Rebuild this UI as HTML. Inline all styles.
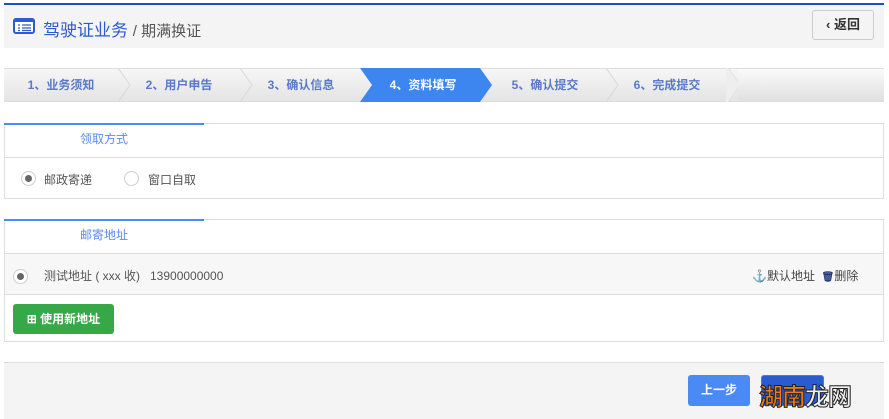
<!DOCTYPE html>
<html><head><meta charset="utf-8"><style>
*{margin:0;padding:0;box-sizing:border-box}
body{width:889px;height:419px;background:#fff;font-family:"Liberation Sans","Noto Sans CJK SC",sans-serif;position:relative;overflow:hidden;font-size:12px;color:#555}
.abs{position:absolute}
.hdr{left:4px;top:3px;width:880px;height:45px;background:#f4f4f4;border-top:2px solid #1a52c4}
.steps{left:4px;top:68px;width:880px;height:34px;background:linear-gradient(#f6f6f6,#e4e4e4);border-top:1px solid #ddd;border-bottom:1px solid #ddd}
.st{position:absolute;top:0;height:32px;line-height:32px;font-weight:bold;color:#5a79c8;font-size:12px;text-align:center}
.box{left:4px;width:880px;border:1px solid #ddd;background:#fff}
.tab{position:absolute;left:-1px;top:-1px;width:200px;height:2px;background:#4a8af4}
.radio{display:inline-block;width:15px;height:15px;border:1px solid #ccc;border-radius:50%;background:#fff;position:absolute}
.radio.on::after{content:"";position:absolute;left:3px;top:3px;width:7px;height:7px;border-radius:50%;background:#666}
</style></head><body>
<div class="abs hdr">
 <svg class="abs" style="left:9px;top:13px" width="22" height="16" viewBox="0 0 22 16"><rect x="1" y="1" width="20" height="14" rx="2" fill="#fff" stroke="#2a5bd0" stroke-width="2"/><rect x="1" y="1" width="20" height="3" fill="#2a5bd0"/><path d="M5 7h2M9 7h9M5 10h2M9 10h9M5 12.5h2M9 12.5h9" stroke="#2a5bd0" stroke-width="1.3"/></svg>
 <div class="abs" style="left:39px;top:11px;font-size:17px;color:#2a5bd0">驾驶证业务 <span style="color:#555;font-size:15px">/ 期满换证</span></div>
 <div class="abs" style="left:808px;top:5px;width:62px;height:30px;border:1px solid #ccc;border-radius:3px;background:#f4f4f4;font-weight:bold;color:#333;font-size:13px;line-height:28px;text-align:center">‹ 返回</div>
</div>
<div class="abs steps">
 <div class="st" style="left:0;width:114px">1、业务须知</div>
 <div class="st" style="left:114px;width:122px">2、用户申告</div>
 <div class="st" style="left:236px;width:122px">3、确认信息</div>
 <svg class="abs" style="left:356px;top:-1px" width="134" height="34"><polygon points="0,0 120,0 132,17 120,34 0,34 12,17" fill="#3d86f0"/></svg>
 <div class="st" style="left:358px;width:122px;color:#fff">4、资料填写</div>
 <div class="st" style="left:480px;width:122px">5、确认提交</div>
 <div class="st" style="left:602px;width:122px">6、完成提交</div>
 <svg class="abs" style="left:0;top:-1px" width="740" height="34"><g fill="none" stroke="#d8d8d8"><path d="M114 0l12 17-12 17M236 0l12 17-12 17M602 0l12 17-12 17M724 0l12 17-12 17"/></g></svg>
 <div class="abs" style="left:734px;top:0;width:146px;height:32px;background:linear-gradient(#fafafa,#e0e0e0)"></div>
 <svg class="abs" style="left:722px;top:-1px" width="16" height="34"><polygon points="0,0 2,0 14,17 2,34 0,34" fill="#eee"/></svg>
</div>

<div class="abs box" style="top:123px;height:76px">
 <div class="tab"></div>
 <div class="abs" style="left:75px;top:6px;color:#5b8af0">领取方式</div>
 <div class="abs" style="left:0;top:33px;width:878px;height:1px;background:#ddd"></div>
 <span class="radio on" style="left:16px;top:47px"></span><span class="abs" style="left:39px;top:47px;color:#555">邮政寄递</span>
 <span class="radio" style="left:119px;top:47px"></span><span class="abs" style="left:143px;top:47px;color:#555">窗口自取</span>
</div>

<div class="abs box" style="top:219px;height:123px">
 <div class="tab"></div>
 <div class="abs" style="left:75px;top:6px;color:#5b8af0">邮寄地址</div>
 <div class="abs" style="left:0;top:33px;width:878px;height:42px;background:#f7f7f7;border-top:1px solid #ddd;border-bottom:1px solid #ddd"></div>
 <span class="radio on" style="left:8px;top:49px"></span>
 <span class="abs" style="left:39px;top:47px;color:#555">测试地址 ( xxx 收)&nbsp;&nbsp;&nbsp;13900000000</span>
 <span class="abs" style="left:747px;top:47px;color:#444"><b style="color:#223a7a">⚓</b>默认地址&nbsp;&nbsp;<b style="color:#223a7a;font-size:10px">🗑</b>删除</span>
 <div class="abs" style="left:8px;top:84px;width:101px;height:30px;background:#37a847;border-radius:3px;color:#fff;font-weight:bold;line-height:30px;text-align:center">⊞ 使用新地址</div>
</div>

<div class="abs" style="left:4px;top:362px;width:880px;height:57px;background:#f4f4f4;border-top:1px solid #ddd">
 <div class="abs" style="left:684px;top:12px;width:62px;height:31px;background:#4a8af4;border-radius:3px;color:#fff;font-weight:bold;line-height:31px;text-align:center">上一步</div>
 <div class="abs" style="left:757px;top:12px;width:63px;height:31px;border:1px solid #3e7de6;border-radius:3px;background:#2a5bd0"></div>
 <div class="abs" style="left:755px;top:14px;font-size:24px;font-weight:bold;color:#f07a10;-webkit-text-stroke:1px #222;letter-spacing:-1px">湖南<span style="color:#eee">龙网</span></div>
</div>
</body></html>
